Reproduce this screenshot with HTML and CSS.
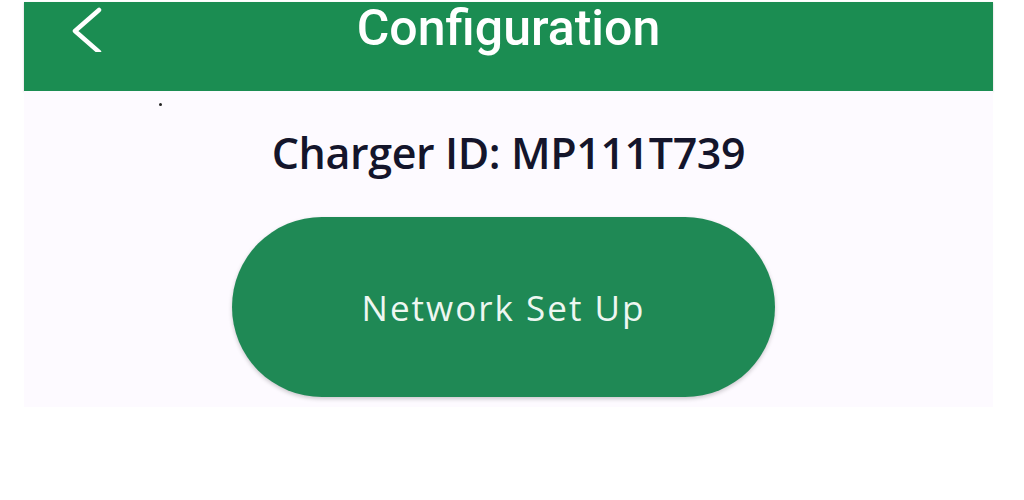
FILE: index.html
```html
<!DOCTYPE html>
<html lang="en">
<head>
  <meta charset="UTF-8" />
  <meta name="viewport" content="width=device-width, initial-scale=1.0"/>
  <title>Configuration</title>
  <link rel="stylesheet" href="styles.css">
</head>
<body>
  <div class="screen">
    <header class="top-bar">
      <button class="back" aria-label="Back">
        <svg width="30" height="46" viewBox="0 0 30 46">
          <polyline points="27,4 3,25 27,46" fill="none" stroke="#fff" stroke-width="4.5" stroke-linecap="round" stroke-linejoin="round"/>
        </svg>
      </button>
      <h1>Configuration</h1>
      <span></span>
    </header>

    <main class="content">
      <span class="speck"></span>
      <h2 class="charger-id">Charger ID: MP111T739</h2>
      <button class="pill">Network Set Up</button>
    </main>
  </div>
</body>
</html>
```

FILE: styles.css
```css
body {
  margin: 0;
  background-color: #fff;
  font-family: 'Open Sans', sans-serif;
}
.screen {
  width: 969px;
  margin: 2px 0 0 24px;
}
.top-bar {
  height: 89px;
  display: grid;
  grid-template-columns: 1fr auto 1fr;
  align-items: start;
  background-color: #1b8d52;
  box-shadow: 0 1px 2px rgba(0, 0, 0, 0.2);
  position: relative;
}
.back {
  justify-self: start;
  margin: 4px 0 0 48px;
  padding: 0;
  border: none;
  background: none;
  cursor: pointer;
}
.back svg {
  display: block;
}
h1 {
  margin: 0;
  font-family: Roboto, sans-serif;
  font-weight: 500;
  font-size: 50px;
  line-height: 52px;
  color: #fff;
}
.content {
  height: 316px;
  background-color: #fdfaff;
  display: flex;
  flex-direction: column;
  align-items: center;
  position: relative;
}
.speck {
  position: absolute;
  left: 135px;
  top: 12px;
  width: 3px;
  height: 3px;
  border-radius: 50%;
  background-color: #222;
}
.charger-id {
  margin: 34px 0 0;
  font-weight: 600;
  font-size: 43px;
  line-height: 56px;
  letter-spacing: -0.4px;
  color: #14152b;
}
.pill {
  margin: 36px 10px 0 0;
  width: 543px;
  height: 180px;
  border: none;
  border-radius: 90px;
  background-color: #1f8955;
  box-shadow: 0 2px 4px rgba(0, 0, 0, 0.2);
  font-family: 'Open Sans', sans-serif;
  font-size: 35px;
  font-weight: 400;
  letter-spacing: 2px;
  color: #eef7f1;
  cursor: pointer;
}
```
